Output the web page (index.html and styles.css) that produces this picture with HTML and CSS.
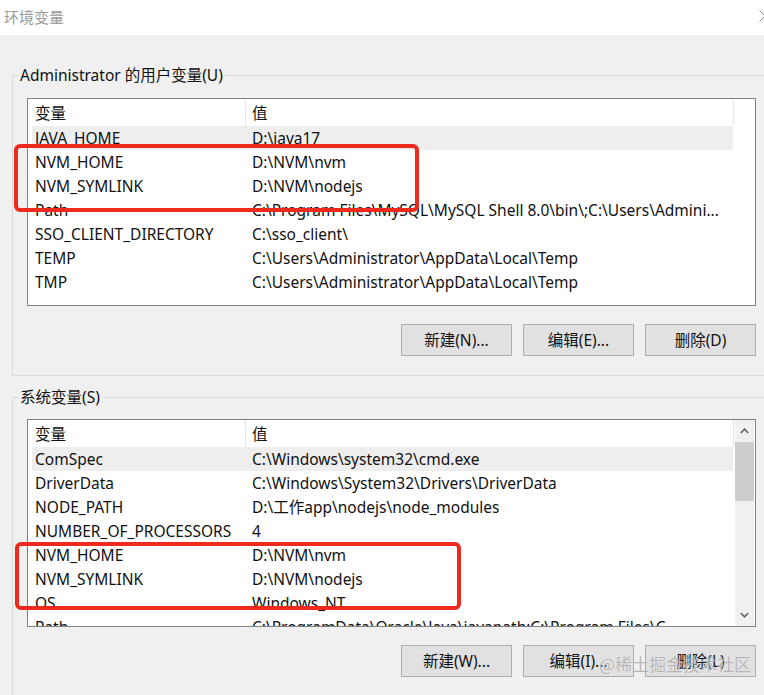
FILE: index.html
```html
<!DOCTYPE html>
<html lang="zh-CN">
<head>
<meta charset="utf-8">
<title>环境变量</title>
<link rel="stylesheet" href="styles.css">
</head>
<body>
<div class="window">
  <div class="titlebar">
    <span class="title">环境变量</span>
    <svg class="close" width="12" height="12" viewBox="0 0 12 12"><path d="M0.5 0.5L11.5 11.5M11.5 0.5L0.5 11.5" stroke="#8a8a8a" stroke-width="1" fill="none"/></svg>
  </div>
  <div class="content">
    <fieldset class="group">
      <legend>Administrator 的用户变量(U)</legend>
      <div class="listbox">
        <div class="lv">
          <div class="lv-head"><div class="hc name">变量</div><div class="hc val">值</div></div>
          <div class="row sel"><div class="c name">JAVA_HOME</div><div class="c val">D:\java17</div></div>
          <div class="row"><div class="c name">NVM_HOME</div><div class="c val">D:\NVM\nvm</div></div>
          <div class="row"><div class="c name">NVM_SYMLINK</div><div class="c val">D:\NVM\nodejs</div></div>
          <div class="row"><div class="c name">Path</div><div class="c val">C:\Program Files\MySQL\MySQL Shell 8.0\bin\;C:\Users\Admini...</div></div>
          <div class="row"><div class="c name">SSO_CLIENT_DIRECTORY</div><div class="c val">C:\sso_client\</div></div>
          <div class="row"><div class="c name">TEMP</div><div class="c val">C:\Users\Administrator\AppData\Local\Temp</div></div>
          <div class="row"><div class="c name">TMP</div><div class="c val">C:\Users\Administrator\AppData\Local\Temp</div></div>
        </div>
      </div>
      <div class="buttons">
        <button class="btn">新建(N)...</button>
        <button class="btn">编辑(E)...</button>
        <button class="btn">删除(D)</button>
      </div>
    </fieldset>

    <fieldset class="group sys">
      <legend>系统变量(S)</legend>
      <div class="listbox">
        <div class="lv">
          <div class="lv-head"><div class="hc name">变量</div><div class="hc val">值</div></div>
          <div class="row sel"><div class="c name">ComSpec</div><div class="c val">C:\Windows\system32\cmd.exe</div></div>
          <div class="row"><div class="c name">DriverData</div><div class="c val">C:\Windows\System32\Drivers\DriverData</div></div>
          <div class="row"><div class="c name">NODE_PATH</div><div class="c val">D:\工作app\nodejs\node_modules</div></div>
          <div class="row"><div class="c name">NUMBER_OF_PROCESSORS</div><div class="c val">4</div></div>
          <div class="row"><div class="c name">NVM_HOME</div><div class="c val">D:\NVM\nvm</div></div>
          <div class="row"><div class="c name">NVM_SYMLINK</div><div class="c val">D:\NVM\nodejs</div></div>
          <div class="row"><div class="c name">OS</div><div class="c val">Windows_NT</div></div>
          <div class="row"><div class="c name">Path</div><div class="c val">C:\ProgramData\Oracle\Java\javapath;C:\Program Files\C...</div></div>
        </div>
        <div class="scroll">
          <div class="arrow"><svg width="9" height="6" viewBox="0 0 9 6"><polyline points="0.8,5 4.5,1.2 8.2,5" fill="none" stroke="#606060" stroke-width="1.6"/></svg></div>
          <div class="thumb"></div>
          <div class="track"></div>
          <div class="arrow"><svg width="9" height="6" viewBox="0 0 9 6"><polyline points="0.8,1 4.5,4.8 8.2,1" fill="none" stroke="#606060" stroke-width="1.6"/></svg></div>
        </div>
      </div>
      <div class="buttons">
        <button class="btn">新建(W)...</button>
        <button class="btn">编辑(I)...</button>
        <button class="btn">删除(L)</button>
      </div>
    </fieldset>
  </div>

  <div class="mark mark-user"></div>
  <div class="mark mark-sys"></div>
  <div class="watermark">@稀土掘金技术社区</div>
</div>
</body>
</html>
```

FILE: styles.css
```css
html, body {
  margin: 0;
  padding: 0;
  background: #f0f0f0;
}

.window {
  position: relative;
  width: 764px;
  height: 695px;
  overflow: hidden;
  background: #f0f0f0;
  font-family: "Noto Sans", "Noto Sans CJK SC", sans-serif;
  font-size: 15.5px;
  color: #111;
}

.titlebar {
  height: 35px;
  background: #fff;
  display: flex;
  align-items: flex-start;
}

.title {
  padding-left: 4px;
  line-height: 35px;
  color: #9a9a9a;
  font-size: 15px;
}

.close {
  margin-left: auto;
  margin-top: 10px;
  margin-right: -7px;
  flex: none;
}

.content {
  padding-top: 30px;
}

.group {
  margin: 0 -10px 0 12px;
  border: 1px solid #dadada;
  padding: 13px 17px 19px 14px;
  min-width: 0;
}

.group.sys {
  margin-top: 11px;
  padding-top: 12px;
}

.group legend {
  padding: 0 2px;
  margin-left: -9px;
  line-height: 20px;
  font-size: 15.5px;
  color: #111;
}

.listbox {
  height: 208px;
  box-sizing: border-box;
  border: 1px solid #828282;
  background: #fff;
  display: flex;
  overflow: hidden;
}

.lv {
  width: 706px;
  flex: none;
}

.lv-head {
  height: 27px;
  line-height: 28px;
  display: flex;
  border-right: 1px solid #e5e5e5;
  box-sizing: border-box;
}

.hc.name {
  width: 218px;
  box-sizing: border-box;
  padding-left: 7px;
  border-right: 1px solid #e5e5e5;
}

.hc.val {
  padding-left: 6px;
}

.row {
  height: 24px;
  line-height: 24px;
  display: flex;
  margin: 0 1px 0 4px;
  white-space: nowrap;
}

.row.sel {
  background: #eeeeee;
}

.c.name {
  width: 220px;
  box-sizing: border-box;
  padding-left: 3px;
  flex: none;
  overflow: hidden;
}

.c.val {
  flex: 1;
  overflow: hidden;
}

.scroll {
  width: 19px;
  margin-left: 1px;
  background: #f0f0f0;
  display: flex;
  flex-direction: column;
  flex: none;
}

.arrow {
  height: 22px;
  display: flex;
  align-items: center;
  justify-content: center;
  flex: none;
}

.thumb {
  height: 59px;
  background: #cdcdcd;
  flex: none;
}

.track {
  flex: 1;
}

.buttons {
  margin-top: 18px;
  display: flex;
  justify-content: flex-end;
  gap: 11px;
}

.btn {
  width: 111px;
  height: 32px;
  box-sizing: border-box;
  background: #e1e1e1;
  border: 1px solid #adadad;
  border-radius: 0;
  padding: 0;
  font-family: "Noto Sans", "Noto Sans CJK SC", sans-serif;
  font-size: 15.5px;
  line-height: 28px;
  color: #111;
}

.mark {
  position: absolute;
  box-sizing: border-box;
  border: 4px solid #ee2a1f;
  border-radius: 6px;
}

.mark-user {
  left: 14px;
  top: 144px;
  width: 405px;
  height: 68px;
}

.mark-sys {
  left: 15px;
  top: 542px;
  width: 446px;
  height: 68px;
}

.watermark {
  position: absolute;
  left: 599px;
  top: 652px;
  font-size: 17px;
  line-height: 24px;
  color: rgba(150, 150, 150, 0.7);
  text-shadow: 0 0 1px rgba(255, 255, 255, 0.9);
  font-family: "Noto Sans CJK SC", sans-serif;
  white-space: nowrap;
}
```
